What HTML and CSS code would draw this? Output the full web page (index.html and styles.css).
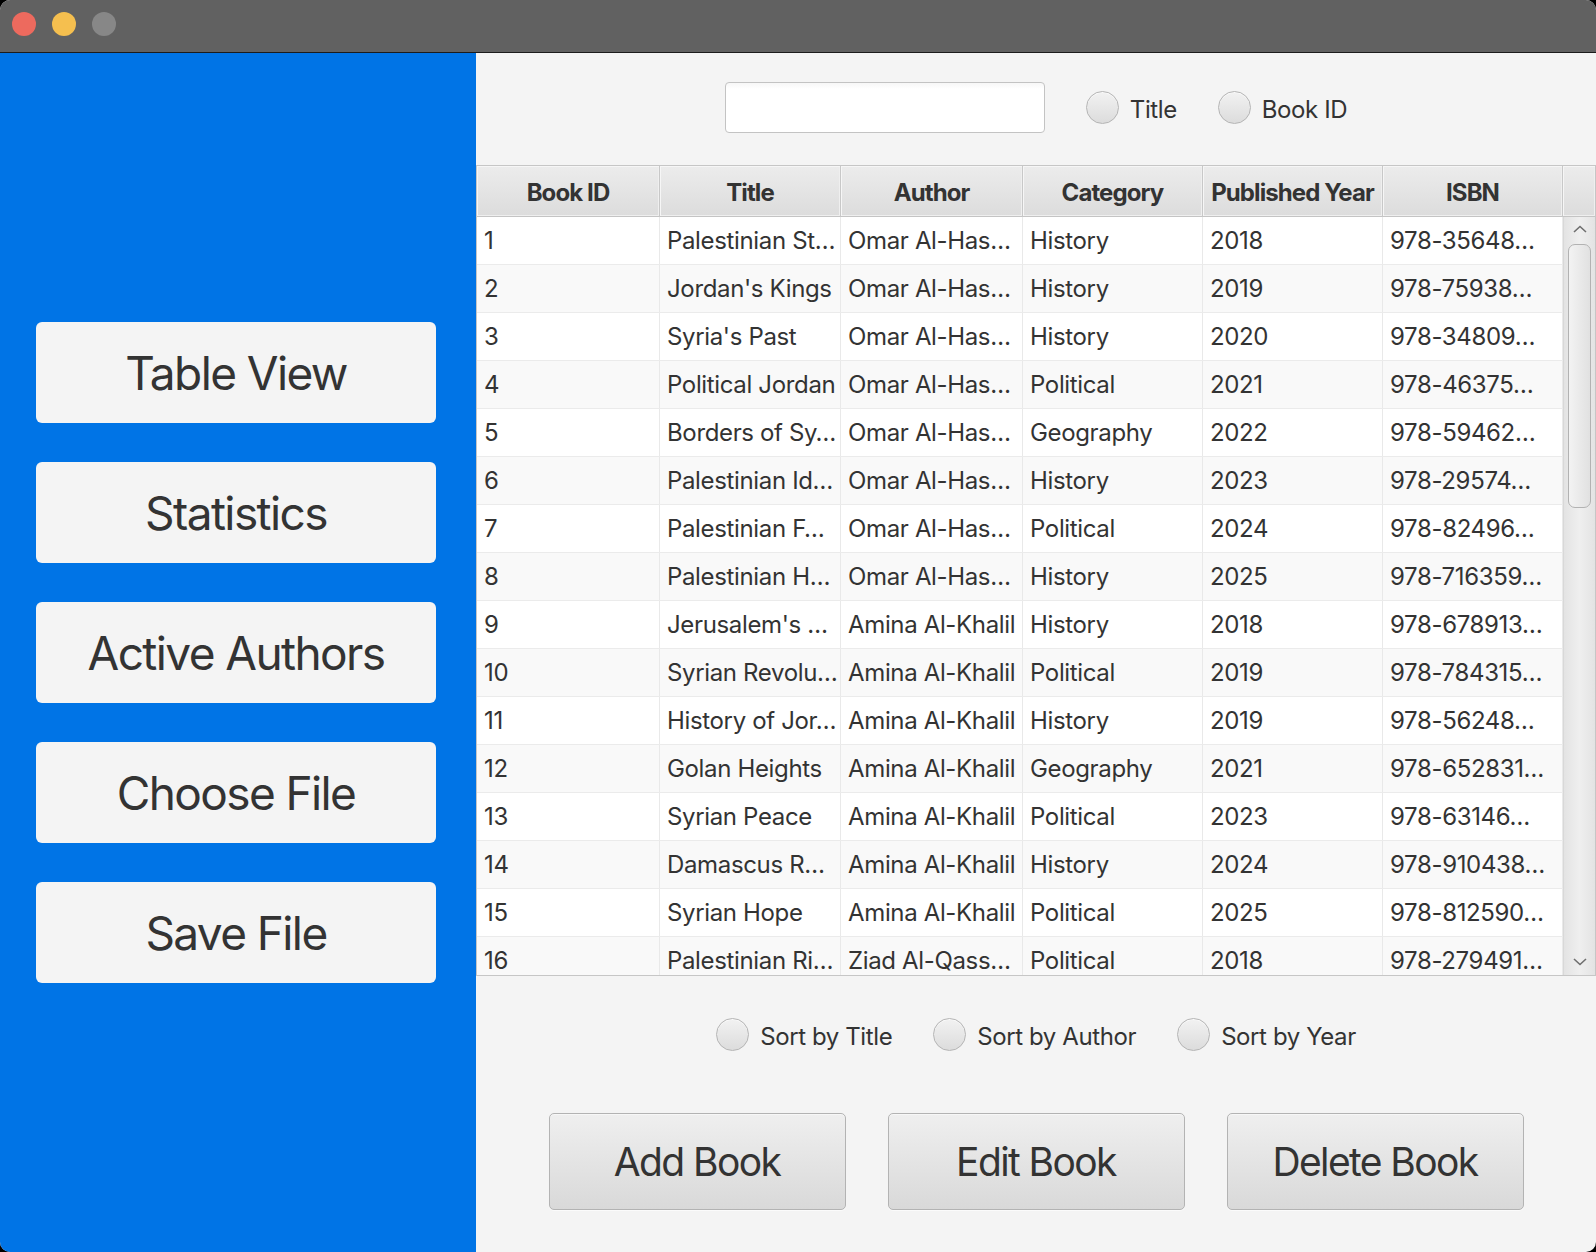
FILE: index.html
```html
<!DOCTYPE html>
<html lang="en">
<head>
<meta charset="utf-8">
<title>Library</title>
<link rel="stylesheet" href="styles.css">
</head>
<body>
<div class="window">
  <div class="titlebar">
    <span class="light red"></span>
    <span class="light yellow"></span>
    <span class="light gray"></span>
  </div>
  <div class="content">
    <aside class="sidebar">
      <div class="side-btn">Table View</div>
      <div class="side-btn">Statistics</div>
      <div class="side-btn">Active Authors</div>
      <div class="side-btn">Choose File</div>
      <div class="side-btn">Save File</div>
    </aside>
    <main class="panel">
      <div class="search-row">
        <div class="field"></div>
        <label class="radio"><span class="dot"></span><span class="label">Title</span></label>
        <label class="radio"><span class="dot"></span><span class="label">Book ID</span></label>
      </div>
      <div class="table">
        <div class="thead">
          <div class="th">Book ID</div>
          <div class="th">Title</div>
          <div class="th">Author</div>
          <div class="th">Category</div>
          <div class="th">Published Year</div>
          <div class="th">ISBN</div>
          <div class="th corner"></div>
        </div>
        <div class="tbody">
          <div class="rows">
            <div class="tr"><div class="td">1</div><div class="td">Palestinian St…</div><div class="td">Omar Al-Has…</div><div class="td">History</div><div class="td">2018</div><div class="td">978-35648…</div></div>
            <div class="tr"><div class="td">2</div><div class="td">Jordan's Kings</div><div class="td">Omar Al-Has…</div><div class="td">History</div><div class="td">2019</div><div class="td">978-75938…</div></div>
            <div class="tr"><div class="td">3</div><div class="td">Syria's Past</div><div class="td">Omar Al-Has…</div><div class="td">History</div><div class="td">2020</div><div class="td">978-34809…</div></div>
            <div class="tr"><div class="td">4</div><div class="td">Political Jordan</div><div class="td">Omar Al-Has…</div><div class="td">Political</div><div class="td">2021</div><div class="td">978-46375…</div></div>
            <div class="tr"><div class="td">5</div><div class="td">Borders of Sy…</div><div class="td">Omar Al-Has…</div><div class="td">Geography</div><div class="td">2022</div><div class="td">978-59462…</div></div>
            <div class="tr"><div class="td">6</div><div class="td">Palestinian Id…</div><div class="td">Omar Al-Has…</div><div class="td">History</div><div class="td">2023</div><div class="td">978-29574…</div></div>
            <div class="tr"><div class="td">7</div><div class="td">Palestinian F…</div><div class="td">Omar Al-Has…</div><div class="td">Political</div><div class="td">2024</div><div class="td">978-82496…</div></div>
            <div class="tr"><div class="td">8</div><div class="td">Palestinian H…</div><div class="td">Omar Al-Has…</div><div class="td">History</div><div class="td">2025</div><div class="td">978-716359…</div></div>
            <div class="tr"><div class="td">9</div><div class="td">Jerusalem's …</div><div class="td">Amina Al-Khalil</div><div class="td">History</div><div class="td">2018</div><div class="td">978-678913…</div></div>
            <div class="tr"><div class="td">10</div><div class="td">Syrian Revolu…</div><div class="td">Amina Al-Khalil</div><div class="td">Political</div><div class="td">2019</div><div class="td">978-784315…</div></div>
            <div class="tr"><div class="td">11</div><div class="td">History of Jor…</div><div class="td">Amina Al-Khalil</div><div class="td">History</div><div class="td">2019</div><div class="td">978-56248…</div></div>
            <div class="tr"><div class="td">12</div><div class="td">Golan Heights</div><div class="td">Amina Al-Khalil</div><div class="td">Geography</div><div class="td">2021</div><div class="td">978-652831…</div></div>
            <div class="tr"><div class="td">13</div><div class="td">Syrian Peace</div><div class="td">Amina Al-Khalil</div><div class="td">Political</div><div class="td">2023</div><div class="td">978-63146…</div></div>
            <div class="tr"><div class="td">14</div><div class="td">Damascus R…</div><div class="td">Amina Al-Khalil</div><div class="td">History</div><div class="td">2024</div><div class="td">978-910438…</div></div>
            <div class="tr"><div class="td">15</div><div class="td">Syrian Hope</div><div class="td">Amina Al-Khalil</div><div class="td">Political</div><div class="td">2025</div><div class="td">978-812590…</div></div>
            <div class="tr"><div class="td">16</div><div class="td">Palestinian Ri…</div><div class="td">Ziad Al-Qass…</div><div class="td">Political</div><div class="td">2018</div><div class="td">978-279491…</div></div>
          </div>
          <div class="scrollbar">
            <svg class="arrow" width="14" height="8" viewBox="0 0 14 8"><polyline points="1,7 7,1.5 13,7" fill="none" stroke="#6f6f6f" stroke-width="1.6"/></svg>
            <div class="thumb"></div>
            <div class="spacer"></div>
            <svg class="arrow" width="14" height="8" viewBox="0 0 14 8"><polyline points="1,1 7,6.5 13,1" fill="none" stroke="#6f6f6f" stroke-width="1.6"/></svg>
          </div>
        </div>
      </div>
      <div class="sort-row">
        <label class="radio"><span class="dot"></span><span class="label">Sort by Title</span></label>
        <label class="radio"><span class="dot"></span><span class="label">Sort by Author</span></label>
        <label class="radio"><span class="dot"></span><span class="label">Sort by Year</span></label>
      </div>
      <div class="actions">
        <div class="btn">Add Book</div>
        <div class="btn">Edit Book</div>
        <div class="btn">Delete Book</div>
      </div>
    </main>
  </div>
</div>
</body>
</html>
```

FILE: styles.css
```css
html, body {
  margin: 0;
  padding: 0;
  background: #000;
}
body {
  width: 1596px;
  height: 1252px;
  overflow: hidden;
  font-family: Inter, "Noto Sans", "Liberation Sans", sans-serif;
  color: #333;
}
.window {
  width: 1596px;
  height: 1252px;
  border-radius: 10px;
  overflow: hidden;
  display: flex;
  flex-direction: column;
  background: #f4f4f4;
}
.titlebar {
  height: 52px;
  flex: none;
  box-sizing: border-box;
  background: #616161;
  border-bottom: 1px solid #1c1c1c;
  display: flex;
  align-items: flex-start;
  gap: 16px;
  padding: 12px 0 0 12px;
  height: 53px;
}
.light {
  width: 24px;
  height: 24px;
  border-radius: 50%;
}
.red { background: #ed6a5e; }
.yellow { background: #f5bf4f; }
.gray { background: #878787; }

.content {
  flex: 1;
  display: flex;
  min-height: 0;
}
.sidebar {
  width: 476px;
  flex: none;
  box-sizing: border-box;
  background: #0074e6;
  display: flex;
  flex-direction: column;
  justify-content: center;
  gap: 39px;
  padding-left: 36px;
}
.side-btn {
  width: 400px;
  height: 101px;
  background: #f4f4f4;
  border-radius: 6px;
  display: flex;
  align-items: center;
  justify-content: center;
  font-size: 46px;
  letter-spacing: -1.6px;
  color: #333;
}

.panel {
  flex: 1;
  display: flex;
  flex-direction: column;
  min-width: 0;
}
.search-row {
  margin-top: 29px;
  height: 51px;
  display: flex;
  align-items: center;
  justify-content: center;
  gap: 41px;
}
.field {
  width: 318px;
  height: 49px;
  background: linear-gradient(#f7f7f7, #fff 6px);
  border: 1px solid #c3c3c3;
  border-radius: 4px;
}
.radio {
  display: flex;
  align-items: center;
  gap: 11px;
  font-size: 24px;
  letter-spacing: -0.4px;
  color: #333;
}
.label {
  padding-top: 3px;
}
.dot {
  width: 31px;
  height: 31px;
  border-radius: 50%;
  border: 1.5px solid #b4b4b4;
  background: linear-gradient(#f2f2f2, #dcdcdc);
  box-shadow: inset 0 1px 0 #fafafa;
}

.table {
  margin-top: 32px;
  height: 809px;
  border: 1px solid #c6c6c6;
  background: #fff;
  display: flex;
  flex-direction: column;
}
.thead {
  display: grid;
  grid-template-columns: 183px 181px 182px 180px 180px 180px 32px;
  height: 51px;
  flex: none;
}
.th {
  box-sizing: border-box;
  background: linear-gradient(#ececec, #dcdcdc);
  border-right: 1px solid #c8c8c8;
  border-bottom: 1px solid #c4c4c4;
  box-shadow: inset 1px 1px 0 #f6f6f6, inset -1px -1px 0 #efefef;
  display: flex;
  align-items: center;
  justify-content: center;
  padding-top: 3px;
  font-weight: 700;
  font-size: 24px;
  letter-spacing: -0.9px;
  color: #333;
  white-space: nowrap;
  overflow: hidden;
}
.th.corner { border-right: none; }
.tbody {
  flex: 1;
  display: flex;
  min-height: 0;
  overflow: hidden;
}
.rows {
  width: 1086px;
  flex: none;
}
.tr {
  display: grid;
  grid-template-columns: 183px 181px 182px 180px 180px 180px;
  height: 48px;
  box-sizing: border-box;
  border-bottom: 1px solid #ebebeb;
  background: #fff;
}
.tr:nth-child(even) { background: #f9f9f9; }
.td {
  box-sizing: border-box;
  border-right: 1px solid #e9e9e9;
  padding-left: 7px;
  display: flex;
  align-items: center;
  font-size: 24px;
  letter-spacing: -0.35px;
  color: #333;
  white-space: nowrap;
  overflow: hidden;
}
.scrollbar {
  flex: 1;
  box-sizing: border-box;
  border-left: 1px solid #d8d8d8;
  background: linear-gradient(to right, #e3e3e3, #efefef 50%, #e3e3e3);
  display: flex;
  flex-direction: column;
  align-items: center;
  padding: 8px 0 9px;
}
.arrow { flex: none; display: block; }
.thumb {
  margin-top: 11px;
  width: 21px;
  height: 262px;
  border: 1.5px solid #b2b2b2;
  border-radius: 7px;
  background: linear-gradient(to right, #f3f3f3, #e1e1e1);
  flex: none;
}
.spacer { flex: 1; }

.sort-row {
  margin-top: 42px;
  height: 33px;
  display: flex;
  align-items: center;
  justify-content: center;
  gap: 41px;
}
.actions {
  margin-top: 62px;
  display: flex;
  justify-content: center;
  gap: 42px;
}
.btn {
  width: 295px;
  height: 95px;
  border: 1.5px solid #b3b3b3;
  border-radius: 5px;
  background: linear-gradient(#efefef, #d9d9d9);
  box-shadow: 0 1px 0 #fbfbfb, inset 0 1px 0 #f7f7f7;
  display: flex;
  align-items: center;
  justify-content: center;
  font-size: 39px;
  letter-spacing: -1.6px;
  color: #333;
}
```
